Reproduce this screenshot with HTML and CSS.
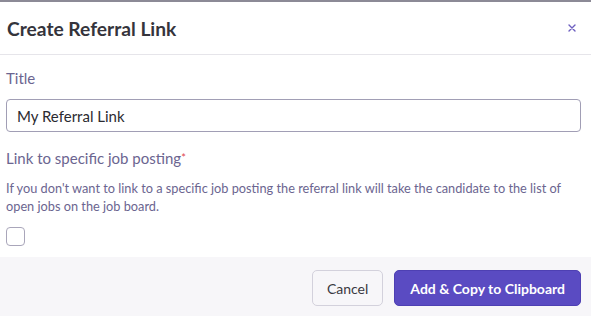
FILE: index.html
```html
<!DOCTYPE html>
<html>
<head>
  <meta charset="utf-8">
  <link rel="stylesheet" href="styles.css">
</head>
<body>
  <div class="modal">
    <div class="modal-header">
      <div class="modal-title">Create Referral Link</div>
      <button class="close-btn" title="Close">
        <svg width="8" height="8" viewBox="0 0 8 8"><path d="M1 1L7 7M7 1L1 7" stroke="#6d5fc0" stroke-width="1.4" stroke-linecap="round"/></svg>
      </button>
    </div>

    <div class="modal-body">
      <div class="field">
        <label class="field-label" for="titleInput">Title</label>
        <input id="titleInput" class="text-input" type="text" value="My Referral Link">
      </div>

      <div class="field">
        <div class="field-label">Link to specific job posting<span class="required">*</span></div>
        <div class="field-help">If you don't want to link to a specific job posting the referral link will take the candidate to the list of open jobs on the job board.</div>
        <div class="checkbox"></div>
      </div>
    </div>

    <div class="modal-footer">
      <button class="btn btn-secondary">Cancel</button>
      <button class="btn btn-primary">Add &amp; Copy to Clipboard</button>
    </div>
  </div>
</body>
</html>
```

FILE: styles.css
```css
body {
  margin: 0;
  font-family: Lato, "Open Sans", sans-serif;
  background-color: #fff;
}

.modal {
  width: 591px;
  height: 316px;
  border-top: 2px solid #8c8a96;
  box-sizing: border-box;
  display: flex;
  flex-direction: column;
}

.modal-header {
  flex-shrink: 0;
  display: flex;
  align-items: center;
  justify-content: space-between;
  height: 52px;
  padding: 0 15px 0 7px;
  border-bottom: 1px solid #e6e5ea;
}

.modal-title {
  font-size: 19.2px;
  font-weight: bold;
  color: #35343c;
}

.close-btn {
  background: none;
  border: none;
  padding: 0;
  cursor: pointer;
  display: flex;
}

.modal-body {
  flex: 1;
  padding: 14px 10px 0 6px;
}

.field {
  margin-bottom: 17px;
}

.field:last-child {
  margin-bottom: 0;
}

.field-label {
  display: block;
  font-size: 15px;
  line-height: 18px;
  color: #6b6590;
  margin-bottom: 12px;
}

.required {
  color: #e0474f;
  font-size: 11px;
  vertical-align: top;
}

.text-input {
  display: block;
  width: 100%;
  box-sizing: border-box;
  height: 33px;
  padding: 0 10px;
  border: 1px solid #a19eb5;
  border-radius: 4px;
  font-family: inherit;
  font-size: 15px;
  color: #2b2a30;
}

.field-help {
  font-size: 12.75px;
  line-height: 18px;
  color: #6b6590;
  margin-bottom: 12px;
}

.checkbox {
  width: 17px;
  height: 17px;
  border: 1px solid #a9a6ba;
  border-radius: 4px;
}

.modal-footer {
  flex-shrink: 0;
  display: flex;
  justify-content: flex-end;
  align-items: flex-start;
  gap: 11px;
  height: 59px;
  box-sizing: border-box;
  padding: 13px 10px 0;
  background-color: #f7f6f9;
}

.btn {
  height: 36px;
  padding: 0 14px;
  border-radius: 5px;
  font-family: inherit;
  font-size: 14px;
  cursor: pointer;
}

.btn-primary {
  padding: 0 15px;
  background-color: #5a4bc2;
  color: white;
  border: 1px solid #4e40b3;
  font-weight: bold;
}

.btn-secondary {
  background-color: #f7f6f9;
  color: #3a3941;
  border: 1px solid #d3d1dc;
}
```
